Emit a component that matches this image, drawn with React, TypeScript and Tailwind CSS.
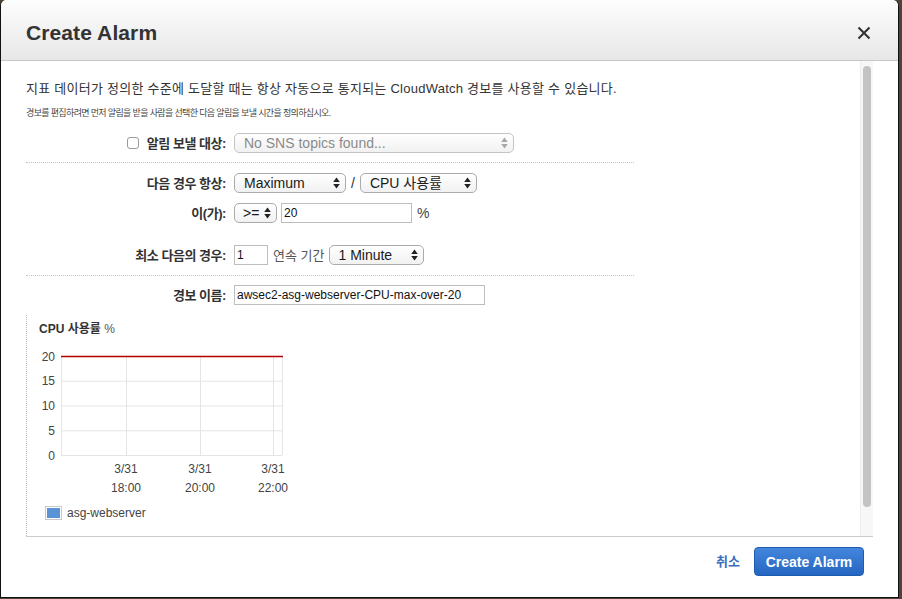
import React from "react";

function Arrows({ disabled = false }: { disabled?: boolean }) {
  const c = disabled ? "#a8a8a8" : "#222";
  return (
    <svg width="7" height="12" viewBox="0 0 7 12" className="block shrink-0">
      <path d="M3.5 0.5L6.8 5H0.2z" fill={c} />
      <path d="M3.5 11.5L0.2 7H6.8z" fill={c} />
    </svg>
  );
}

function Select({
  className,
  children,
  disabled = false,
}: {
  className: string;
  children: React.ReactNode;
  disabled?: boolean;
}) {
  return (
    <div
      className={
        "flex h-[20px] items-center justify-between rounded-[5px] border border-[#ababab] bg-gradient-to-b from-white to-[#f1f1f1] pr-[5px] text-[14px] leading-none " +
        (disabled ? "text-[#8a8a8a] border-[#c4c4c4] " : "text-[#1a1a1a] ") +
        className
      }
    >
      <span className="whitespace-nowrap">{children}</span>
      <Arrows disabled={disabled} />
    </div>
  );
}

function Input({ className, value }: { className: string; value: string }) {
  return (
    <div
      className={
        "flex h-[20px] items-center border border-[#bdbdbd] bg-white pl-[2px] text-[12px] leading-none text-[#111] whitespace-nowrap " +
        className
      }
    >
      {value}
    </div>
  );
}

function Label({ children }: { children: React.ReactNode }) {
  return (
    <div className="flex w-[200px] shrink-0 items-center justify-end text-[13px] font-bold leading-none tracking-[-0.45px] text-[#333]">
      {children}
    </div>
  );
}

function Chart() {
  const hy = [12, 36.75, 61.5, 86.25, 111];
  const yl = ["20", "15", "10", "5", "0"];
  const vx = [99, 173, 246];
  return (
    <svg width="274" height="152" className="block">
      {hy.map((y) => (
        <line key={y} x1={34} x2={255} y1={y + 0.5} y2={y + 0.5} stroke="#e4e4e4" strokeWidth={1} />
      ))}
      {vx.map((x) => (
        <line key={x} x1={x + 0.5} x2={x + 0.5} y1={12} y2={111} stroke="#e4e4e4" strokeWidth={1} />
      ))}
      <line x1={34.5} x2={34.5} y1={12} y2={111} stroke="#e4e4e4" />
      <line x1={255.5} x2={255.5} y1={12} y2={111} stroke="#e4e4e4" />
      <line x1={34} x2={256} y1={12.5} y2={12.5} stroke="#b40000" strokeWidth={1.3} />
      {hy.map((y, i) => (
        <text
          key={"l" + i}
          x={28}
          y={y + 0.5}
          textAnchor="end"
          dominantBaseline="central"
          fontSize={12}
          fill="#444"
          fontFamily="'Liberation Sans', sans-serif"
        >
          {yl[i]}
        </text>
      ))}
      {vx.map((x, i) => (
        <g key={"x" + i}>
          <text
            x={x}
            y={125}
            textAnchor="middle"
            dominantBaseline="central"
            fontSize={12}
            fill="#444"
            fontFamily="'Liberation Sans', sans-serif"
          >
            3/31
          </text>
          <text
            x={x}
            y={144}
            textAnchor="middle"
            dominantBaseline="central"
            fontSize={12}
            fill="#444"
            fontFamily="'Liberation Sans', sans-serif"
          >
            {["18:00", "20:00", "22:00"][i]}
          </text>
        </g>
      ))}
    </svg>
  );
}

export default function App() {
  return (
    <div className="h-[599px] w-[902px] overflow-hidden bg-[#4d4339] font-['Liberation_Sans','Noto_Sans_CJK_KR',sans-serif]">
      <div className="flex h-[598px] w-[899px] flex-col overflow-hidden rounded-tl-[6px] rounded-tr-[6px] border-b border-l border-r border-[#111] bg-white">
        {/* Header */}
        <div className="flex h-[61px] shrink-0 items-center justify-between border-b border-[#c8c8c8] bg-gradient-to-b from-[#fdfdfd] to-[#e7e7e7] pl-[25px] pr-[27px] pt-[5px]">
          <div className="text-[21px] font-bold leading-none tracking-[0.1px] text-[#333]">Create Alarm</div>
          <svg width="14" height="14" viewBox="0 0 14 14" className="block">
            <path d="M1.5 1.5L12.5 12.5M12.5 1.5L1.5 12.5" stroke="#333" strokeWidth="2.1" strokeLinecap="butt" />
          </svg>
        </div>

        {/* Body */}
        <div className="ml-[25px] flex h-[476px] w-[847px] shrink-0 border-b border-[#cccccc]">
          <div className="flex min-w-0 flex-1 flex-col pt-[18px]">
            <div className="h-[20px] whitespace-nowrap text-[13px] leading-[20px] tracking-[0.25px] text-[#333]">
              지표 데이터가 정의한 수준에 도달할 때는 항상 자동으로 통지되는 CloudWatch 경보를 사용할 수 있습니다.
            </div>
            <div className="mt-[6px] h-[16px] whitespace-nowrap text-[9px] leading-[16px] tracking-[-0.65px] text-[#444]">
              경보를 편집하려면 먼저 알림을 받을 사람을 선택한 다음 알림을 보낼 시간을 정의하십시오.
            </div>

            {/* SNS row */}
            <div className="mt-[12px] flex h-[20px] items-center gap-[8px]">
              <div className="flex w-[200px] shrink-0 items-center justify-end gap-[8px]">
                <div className="h-[12px] w-[12px] rounded-[3px] border border-[#9a9a9a] bg-white" />
                <span className="text-[13px] font-bold leading-none tracking-[-0.45px] text-[#333]">알림 보낼 대상:</span>
              </div>
              <Select className="w-[280px] pl-[9px]" disabled>
                No SNS topics found...
              </Select>
            </div>

            <div className="mt-[9px] w-[608px] border-t border-dotted border-[#c4c4c4]" />

            {/* Threshold rows */}
            <div className="mt-[10px] flex h-[20px] items-center gap-[8px]">
              <Label>다음 경우 항상:</Label>
              <Select className="w-[112px] pl-[9px]">Maximum</Select>
              <span className="ml-[-3px] mr-[-3px] text-[14px] leading-none text-[#333]">/</span>
              <Select className="w-[117px] pl-[9px]">CPU 사용률</Select>
            </div>
            <div className="mt-[10px] flex h-[20px] items-center gap-[4px]">
              <div className="mr-[4px] flex">
                <Label>이(가):</Label>
              </div>
              <Select className="w-[43px] pl-[8px]">&gt;=</Select>
              <Input className="w-[131px]" value="20" />
              <span className="ml-[1px] text-[14px] leading-none text-[#444]">%</span>
            </div>
            <div className="mt-[22px] flex h-[20px] items-center gap-[5px]">
              <div className="mr-[3px] flex">
                <Label>최소 다음의 경우:</Label>
              </div>
              <Input className="w-[34px]" value="1" />
              <span className="text-[13px] leading-none text-[#555]">연속 기간</span>
              <Select className="w-[95px] pl-[8px]">1 Minute</Select>
            </div>

            <div className="mt-[10px] w-[608px] border-t border-dotted border-[#c4c4c4]" />

            <div className="mt-[9px] flex h-[20px] items-center gap-[8px]">
              <Label>경보 이름:</Label>
              <Input className="w-[251px]" value="awsec2-asg-webserver-CPU-max-over-20" />
            </div>

            {/* Chart */}
            <div className="mt-[10px] flex flex-1 flex-col border-l border-dotted border-[#bdbdbd]">
              <div className="pl-[12px] pt-[7px] text-[12px] leading-[14px] text-[#333]">
                <span className="font-bold">CPU 사용률</span>
                <span className="text-[#555]"> %</span>
              </div>
              <div className="mt-[8px]">
                <Chart />
              </div>
              <div className="ml-[18px] mt-[10px] flex h-[14px] items-center gap-[5px]">
                <div className="h-[14px] w-[17px] border border-[#c8c8c8] bg-white p-[1px]">
                  <div className="h-full w-full bg-[#5b94d6]" />
                </div>
                <span className="text-[12px] leading-none text-[#444]">asg-webserver</span>
              </div>
            </div>
          </div>

          {/* Scrollbar */}
          <div className="flex w-[13px] shrink-0 justify-center border-l border-[#ececec] bg-[#f7f7f7] pt-[5px]">
            <div className="h-[441px] w-[8px] rounded-full bg-[#c3c3c3]" />
          </div>
        </div>

        {/* Footer */}
        <div className="flex h-[60px] shrink-0 items-start justify-end gap-[14px] pr-[34px] pt-[10px]">
          <span className="mt-[7px] text-[13px] font-semibold leading-[15px] text-[#3b6fc4]">취소</span>
          <div className="flex h-[29px] w-[110px] items-center justify-center rounded-[4px] border border-[#1f5bb0] bg-gradient-to-b from-[#4486dc] to-[#2465c2] text-[14px] font-bold leading-none text-white">
            Create Alarm
          </div>
        </div>
      </div>
    </div>
  );
}
